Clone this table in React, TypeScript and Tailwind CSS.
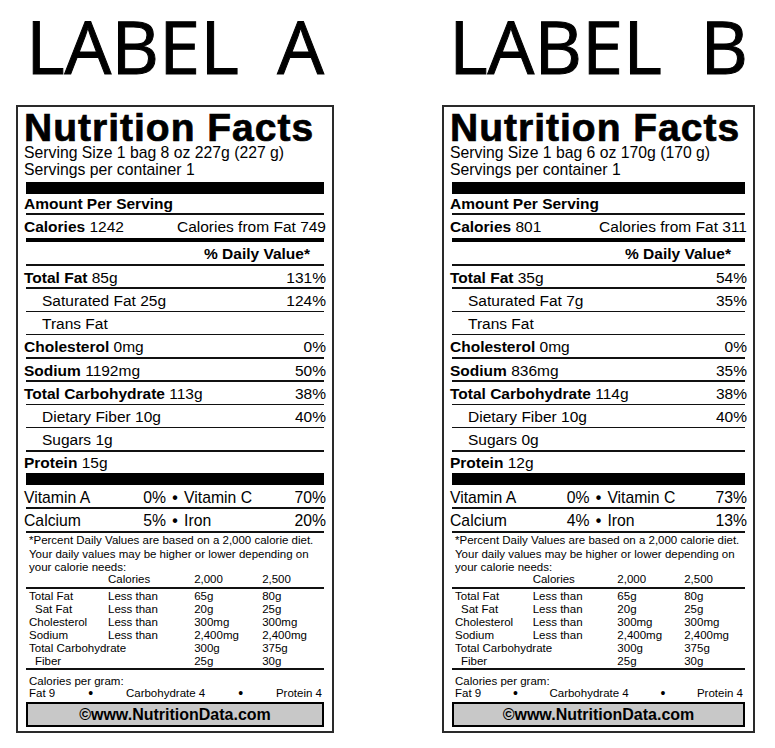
const labels = [
  {
    title: 'LABEL  A',
    width: 'w-[318px]',
    serving: 'Serving Size 1 bag 8 oz 227g (227 g)',
    calories: '1242',
    fatCalories: '749',
    rows: [
      { name: 'Total Fat', amount: '85g', pct: '131%', bold: true },
      { name: 'Saturated Fat', amount: '25g', pct: '124%', bold: false },
      { name: 'Trans Fat', amount: '', pct: '', bold: false },
      { name: 'Cholesterol', amount: '0mg', pct: '0%', bold: true },
      { name: 'Sodium', amount: '1192mg', pct: '50%', bold: true },
      { name: 'Total Carbohydrate', amount: '113g', pct: '38%', bold: true },
      { name: 'Dietary Fiber', amount: '10g', pct: '40%', bold: false },
      { name: 'Sugars', amount: '1g', pct: '', bold: false },
    ],
    protein: '15g',
    vitA: '0%',
    vitC: '70%',
    calcium: '5%',
    iron: '20%',
  },
  {
    title: 'LABEL  B',
    width: 'w-[313px]',
    serving: 'Serving Size 1 bag 6 oz 170g (170 g)',
    calories: '801',
    fatCalories: '311',
    rows: [
      { name: 'Total Fat', amount: '35g', pct: '54%', bold: true },
      { name: 'Saturated Fat', amount: '7g', pct: '35%', bold: false },
      { name: 'Trans Fat', amount: '', pct: '', bold: false },
      { name: 'Cholesterol', amount: '0mg', pct: '0%', bold: true },
      { name: 'Sodium', amount: '836mg', pct: '35%', bold: true },
      { name: 'Total Carbohydrate', amount: '114g', pct: '38%', bold: true },
      { name: 'Dietary Fiber', amount: '10g', pct: '40%', bold: false },
      { name: 'Sugars', amount: '0g', pct: '', bold: false },
    ],
    protein: '12g',
    vitA: '0%',
    vitC: '73%',
    calcium: '4%',
    iron: '13%',
  },
];

const limits = [
  { name: 'Total Fat', less: 'Less than', a: '65g', b: '80g', indent: false },
  { name: 'Sat Fat', less: 'Less than', a: '20g', b: '25g', indent: true },
  { name: 'Cholesterol', less: 'Less than', a: '300mg', b: '300mg', indent: false },
  { name: 'Sodium', less: 'Less than', a: '2,400mg', b: '2,400mg', indent: false },
  { name: 'Total Carbohydrate', less: '', a: '300g', b: '375g', indent: false },
  { name: 'Fiber', less: '', a: '25g', b: '30g', indent: true },
];

type Label = (typeof labels)[number];

const Thin = () => <div className="mx-[2px] h-[1.5px] bg-[#111]" />;

const NutritionLabel = ({ label }: { label: Label }) => (
  <div className={`${label.width} flex flex-col`}>
    {/* big heading above the panel */}
    <div className="h-[105px] text-center text-[74px] leading-[92px] text-black whitespace-pre font-['Open_Sans',sans-serif] [-webkit-text-stroke:1px_black]">
      {label.title}
    </div>

    <div className="border-2 border-[#2a2a2a] px-[6px] pt-[4px] pb-[4px] text-black font-['Liberation_Sans',Arial,sans-serif]">
      <div className="text-[39px] leading-[33px] font-bold tracking-[1px] whitespace-nowrap [-webkit-text-stroke:0.7px_black]">
        Nutrition Facts
      </div>
      <div className="text-[15.75px] leading-[17px] whitespace-nowrap">{label.serving}</div>
      <div className="text-[15.75px] leading-[17px]">Servings per container 1</div>

      <div className="mx-[2px] mt-[4px] h-[12px] bg-black" />
      <div className="h-[19px] text-[15.5px] leading-[19px] font-bold">Amount Per Serving</div>
      <Thin />
      <div className="flex h-[23px] justify-between text-[15.5px] leading-[23px]">
        <span>
          <b>Calories</b> {label.calories}
        </span>
        <span>Calories from Fat {label.fatCalories}</span>
      </div>
      <div className="mx-[2px] h-[4px] bg-black" />
      <div className="h-[22.5px] pr-[16px] text-right text-[15.5px] leading-[23.5px] font-bold">% Daily Value*</div>
      <Thin />

      {label.rows.map((row) => (
        <div key={row.name}>
          <div
            className={`flex h-[21.75px] justify-between text-[15.5px] leading-[23px] whitespace-nowrap ${
              row.bold ? '' : 'pl-[18px]'
            }`}
          >
            <span>
              {row.bold ? <b>{row.name}</b> : row.name} {row.amount}
            </span>
            <span>{row.pct}</span>
          </div>
          <Thin />
        </div>
      ))}

      <div className="h-[21px] text-[15.5px] leading-[22px]">
        <b>Protein</b> {label.protein}
      </div>
      <div className="mx-[2px] h-[12.5px] bg-black" />

      <div className="grid h-[22px] grid-cols-[47%_6%_1fr] pt-[3px] text-[15.75px] leading-[19px]">
        <div className="flex justify-between">
          <span>Vitamin A</span>
          <span>{label.vitA}</span>
        </div>
        <div className="text-center font-bold">•</div>
        <div className="flex justify-between">
          <span>Vitamin C</span>
          <span>{label.vitC}</span>
        </div>
      </div>
      <Thin />
      <div className="grid h-[22.5px] grid-cols-[47%_6%_1fr] pt-[2px] text-[15.75px] leading-[19px]">
        <div className="flex justify-between">
          <span>Calcium</span>
          <span>{label.calcium}</span>
        </div>
        <div className="text-center font-bold">•</div>
        <div className="flex justify-between">
          <span>Iron</span>
          <span>{label.iron}</span>
        </div>
      </div>
      <div className="mx-[2px] h-[2px] bg-[#111]" />

      {/* footnote */}
      <div className="pl-[5px] pr-[4px] pt-[1.3px] text-[11.5px] leading-[13.4px] whitespace-nowrap">
        <div>*Percent Daily Values are based on a 2,000 calorie diet.</div>
        <div>Your daily values may be higher or lower depending on</div>
        <div>your calorie needs:</div>
      </div>
      <div className="mt-[-0.5px] grid h-[13px] grid-cols-[26.6%_29%_22.9%_1fr] pl-[5px] text-[11.5px] leading-[11px]">
        <span />
        <span>Calories</span>
        <span>2,000</span>
        <span>2,500</span>
      </div>
      <div className="mx-[2px] h-[2px] bg-[#111]" />
      <div className="pt-[0.5px] pl-[5px] text-[11.5px] leading-[13px] whitespace-nowrap">
        {limits.map((l) => (
          <div key={l.name} className="grid grid-cols-[26.6%_29%_22.9%_1fr]">
            <span className={l.indent ? 'pl-[6px]' : ''}>{l.name}</span>
            <span>{l.less}</span>
            <span>{l.a}</span>
            <span>{l.b}</span>
          </div>
        ))}
      </div>
      <div className="mx-[2px] mt-[0.5px] h-[2px] bg-[#111]" />

      <div className="pl-[5px] pr-[4px] pt-[5px] text-[11.5px] leading-[12px]">
        <div>Calories per gram:</div>
        <div className="flex justify-between">
          <span>Fat 9</span>
          <span className="text-[14px] leading-[12px]">•</span>
          <span>Carbohydrate 4</span>
          <span className="text-[14px] leading-[12px]">•</span>
          <span>Protein 4</span>
        </div>
      </div>

      <div className="mx-[2px] mt-[3px] h-[25px] border-2 border-black bg-[#c8c8c8] text-center text-[16px] leading-[21px] font-bold">
        ©www.NutritionData.com
      </div>
    </div>
  </div>
);

export default function App() {
  return (
    <div className="flex h-[748px] w-[775px] gap-[108px] bg-white pl-[16px]">
      {labels.map((label) => (
        <NutritionLabel key={label.title} label={label} />
      ))}
    </div>
  );
}
